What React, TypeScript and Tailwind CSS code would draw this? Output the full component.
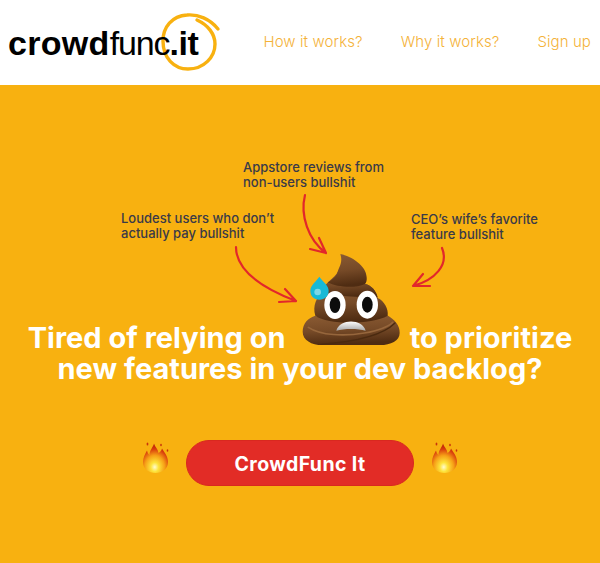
import React from 'react';

// ring coordinates are page pixels, so the viewBox starts where the svg sits
const Ring: React.FC = () => (
  <svg className="absolute left-[147px] top-[-20px]" width="75" height="70" viewBox="155 5 75 70" fill="none">
    <path
      d="M218 28 C210 18 198 13 187 14 C172 15 163 26 163 40 C163 57 174 68 188 68 C204 68 215 56 215 43 C215 33 208 24 197 19"
      stroke="#f8b110"
      strokeWidth="3.4"
      strokeLinecap="round"
    />
  </svg>
);

const Logo: React.FC = () => (
  <div className="relative font-['Liberation_Sans',sans-serif] text-[34px] leading-none text-black">
    <Ring />
    <span className="relative font-bold tracking-[0.3px]">crowd</span>
    <span className="relative tracking-[-1.1px]">func</span>
    <span className="relative font-bold tracking-[-0.4px]">.it</span>
  </div>
);

const Poop: React.FC = () => (
  <svg className="mb-[6px] shrink-0" width="100" height="95" viewBox="240 309 300 285">
    <defs>
      <linearGradient id="tier" x1="0" y1="0" x2="0.15" y2="1">
        <stop offset="0" stopColor="#8c5c34" />
        <stop offset="0.55" stopColor="#764a27" />
        <stop offset="1" stopColor="#4f2c12" />
      </linearGradient>
      <linearGradient id="mouth" x1="0" y1="0" x2="0" y2="1">
        <stop offset="0" stopColor="#ffffff" />
        <stop offset="1" stopColor="#a8a8a8" />
      </linearGradient>
    </defs>
    <path
      d="M283 500 C262 506 245 522 245 548 C245 575 275 590 310 588 L470 588 C505 590 536 578 536 552 C537 530 522 512 497 498 C430 525 340 525 283 500 Z"
      fill="url(#tier)"
    />
    <path
      d="M310 425 C286 442 274 470 283 500 C320 528 450 528 500 500 C503 480 490 456 470 447 C466 425 450 408 432 405 Z"
      fill="url(#tier)"
    />
    <path
      d="M350 368 C342 388 306 402 310 425 C340 445 440 445 470 445 C466 425 450 408 432 404 Z"
      fill="url(#tier)"
    />
    <path
      d="M358 315 C392 322 436 350 437 385 C438 394 436 401 432 405 C405 418 350 416 320 400 C335 392 346 382 350 368 C355 352 366 340 358 315 Z"
      fill="url(#tier)"
    />
    <path d="M300 586 C380 580 480 565 522 522" stroke="#4a2a10" strokeWidth="4" fill="none" strokeLinecap="round" />
    <path d="M262 535 C300 560 370 562 430 552 C470 545 500 535 515 520" stroke="#96663c" strokeWidth="5" fill="none" strokeLinecap="round" />
    <ellipse cx="342" cy="468" rx="32" ry="42" fill="#fff" />
    <ellipse cx="439" cy="467" rx="32" ry="42" fill="#fff" />
    <ellipse cx="342" cy="468" rx="16" ry="24" fill="#0c0c0c" />
    <ellipse cx="439" cy="467" rx="16" ry="24" fill="#0c0c0c" />
    <path d="M346 545 C356 508 424 508 434 545 C410 538 370 538 346 545 Z" fill="url(#mouth)" />
    <path d="M295 383 C305 398 323 408 323 425 C323 441 311 452 295 452 C279 452 268 441 268 425 C268 408 285 398 295 383 Z" fill="#17b9d6" />
    <circle cx="290" cy="429" r="10" fill="#7cd7e6" />
  </svg>
);

const Flame: React.FC<{ id: string }> = ({ id }) => (
  <svg className="mb-[11px]" width="27" height="33" viewBox="0 0 27 33">
    <defs>
      <radialGradient id={id} cx="0.47" cy="0.8" r="0.72">
        <stop offset="0" stopColor="#fffbd0" />
        <stop offset="0.22" stopColor="#fde33a" />
        <stop offset="0.55" stopColor="#f6a016" />
        <stop offset="0.85" stopColor="#d83c0c" />
        <stop offset="1" stopColor="#c22a08" />
      </radialGradient>
    </defs>
    <path
      d="M12 2.500 C13 6 16 8 16.500 12 C18 11 19.500 9.500 20 7.500 C22 11 26 15 26 21 C26 28 20 32 13.500 32 C7 32 1 28 1 21 C1 17 3 13 5 9.500 C5.500 12 6.500 13 7.500 14 C7.500 9 11 6.500 12 2.500 Z"
      fill={`url(#${id})`}
    />
    <ellipse cx="5.500" cy="3" rx="0.900" ry="1.500" fill="#c8340c" />
    <ellipse cx="19" cy="4" rx="0.800" ry="1.300" fill="#c8340c" />
    <ellipse cx="25.500" cy="9.500" rx="0.800" ry="1.300" fill="#c8340c" />
  </svg>
);

const Note: React.FC<{ className: string; lines: string[] }> = ({ className, lines }) => (
  <p className={`absolute whitespace-nowrap font-['Inter',sans-serif] text-[13px] font-medium leading-[15px] text-[#3a3a48] ${className}`}>
    {lines[0]}
    <br />
    {lines[1]}
  </p>
);

const Arrows: React.FC = () => (
  <svg className="absolute left-0 top-0" width="600" height="300" viewBox="0 85 600 300" fill="none" stroke="#e2272b" strokeWidth="2.2" strokeLinecap="round" strokeLinejoin="round">
    <path d="M305 195 C300 215 308 240 326 253 M310 249 L326 253 L319 238" />
    <path d="M236 247 C236 270 262 288 296 301 M279 302 L296 301 L285 289" />
    <path d="M442 248 C449 265 435 280 413 286 M430 286 L413 286 L423 274" />
  </svg>
);

export default function App() {
  return (
    <div className="flex h-[563px] w-[600px] flex-col overflow-hidden bg-white">
      <header className="flex h-[85px] shrink-0 items-center justify-between pl-2 pr-[9px]">
        <Logo />
        <nav className="flex gap-[38px] font-['Inter',sans-serif] text-[15px] font-light tracking-[0.1px] text-[#f4b238]">
          <a href="#">How it works?</a>
          <a href="#">Why it works?</a>
          <a href="#">Sign up</a>
        </nav>
      </header>

      <main className="relative flex flex-1 flex-col items-center bg-[#f8b110] pt-[167px]">
        <Note className="left-[243px] top-[75px]" lines={['Appstore reviews from', 'non-users bullshit']} />
        <Note className="left-[121px] top-[126px]" lines={['Loudest users who don’t', 'actually pay bullshit']} />
        <Note className="left-[411px] top-[127px]" lines={['CEO’s wife’s favorite', 'feature bullshit']} />
        <Arrows />

        <h1 className="flex flex-col items-center whitespace-nowrap font-['Inter',sans-serif] text-[29px] font-bold leading-[31px] text-white">
          <span className="flex items-end">
            <span className="mr-[15px]">Tired of relying on</span>
            <Poop />
            <span className="ml-[9px]">to prioritize</span>
          </span>
          <span>new features in your dev backlog?</span>
        </h1>

        <div className="mt-[56px] flex items-center gap-[17px]">
          <Flame id="flameLeft" />
          <button className="h-[46px] w-[228px] rounded-[23px] border border-[#d9281f] bg-[#e22c26] pt-[3px] font-['Inter',sans-serif] text-[19.5px] font-bold tracking-[0.4px] text-white">
            CrowdFunc It
          </button>
          <Flame id="flameRight" />
        </div>
      </main>
    </div>
  );
}
